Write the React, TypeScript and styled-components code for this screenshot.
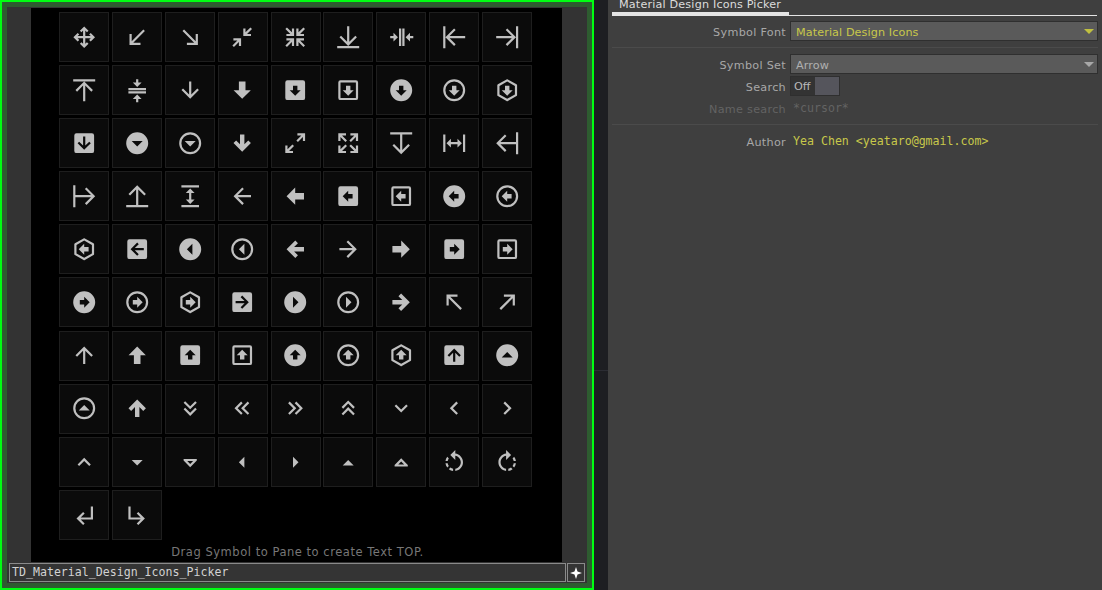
import { createGlobalStyle, styled } from 'styled-components';

const GlobalStyle = createGlobalStyle`
  html, body { margin: 0; padding: 0; background: #1d1e22; overflow: hidden; }
  body { font-family: "DejaVu Sans", sans-serif; }
`;

// rotation around the icon centre, starting from the "down" drawing
const DOWN = 0;
const LEFT = 90;
const UP = 180;
const RIGHT = 270;

const BOLD = 'M12,17L7,12H10V8H14V12H17L12,17Z';
const CIRCLE = 'M12,2A10,10 0 0,1 22,12A10,10 0 0,1 12,22A10,10 0 0,1 2,12A10,10 0 0,1 12,2Z';
const RING = CIRCLE + 'M12,4A8,8 0 0,0 4,12A8,8 0 0,0 12,20A8,8 0 0,0 20,12A8,8 0 0,0 12,4Z';
const BOX = 'M5,3H19A2,2 0 0,1 21,5V19A2,2 0 0,1 19,21H5A2,2 0 0,1 3,19V5A2,2 0 0,1 5,3Z';
const BOX_RING = BOX + 'M5,5V19H19V5Z';
const HEX =
  'M21,16.5C21,16.88 20.79,17.21 20.47,17.38L12.57,21.82C12.41,21.94 12.21,22 12,22C11.79,22 11.59,21.94 11.43,21.82L3.53,17.38C3.21,17.21 3,16.88 3,16.5V7.5C3,7.12 3.21,6.79 3.53,6.62L11.43,2.18C11.59,2.06 11.79,2 12,2C12.21,2 12.41,2.06 12.57,2.18L20.47,6.62C20.79,6.79 21,7.12 21,7.5V16.5M12,4.15L5,8.09V15.91L12,19.85L19,15.91V8.09L12,4.15Z';
const THIN = 'M11,4H13V16L18.5,10.5L19.92,11.92L12,19.84L4.08,11.92L5.5,10.5L11,16V4Z';
const SOLID = 'M9,4H15V12H19.84L12,19.84L4.16,12H9V4Z';
const THICK = 'M10,4H14V13L17.5,9.5L19.92,11.92L12,19.84L4.08,11.92L6.5,9.5L10,13V4Z';
const BOX_ARROW = 'M11,6H13V14.17L16.59,10.59L18,12L12,18L6,12L7.41,10.59L11,14.17Z';
const DROP = 'M7,10L12,15L17,10H7Z';
const DOUBLE = 'M16.59,5.59L18,7L12,13L6,7L7.41,5.59L12,10.17L16.59,5.59M16.59,11.59L18,13L12,19L6,13L7.41,11.59L12,16.17L16.59,11.59Z';
const CHEVRON = 'M7.41,8.58L12,13.17L16.59,8.58L18,10L12,16L6,10L7.41,8.58Z';

type Part = { d: string; rot?: number };
type Symbol = Part[];

const p = (d: string, rot = 0): Symbol => [{ d, rot }];

// one set of the arrow family, turned to the wanted direction
const family = (rot: number) => ({
  thin: p(THIN, rot),
  bold: p(SOLID, rot),
  boldBox: p(BOX + BOLD, rot),
  boldBoxOutline: p(BOX_RING + BOLD, rot),
  boldCircle: p(CIRCLE + BOLD, rot),
  boldCircleOutline: p(RING + BOLD, rot),
  boldHex: [{ d: HEX }, { d: BOLD, rot }] as Symbol,
  box: p(BOX + BOX_ARROW, rot),
  dropCircle: p(CIRCLE + DROP, rot),
  dropCircleOutline: p(RING + DROP, rot),
  thick: p(THICK, rot),
});

const down = family(DOWN);
const left = family(LEFT);
const right = family(RIGHT);
const up = family(UP);

const symbols: Symbol[] = [
  p('M13,11H18L16.5,9.5L17.92,8.08L21.84,12L17.92,15.92L16.5,14.5L18,13H13V18L14.5,16.5L15.92,17.92L12,21.84L8.08,17.92L9.5,16.5L11,18V13H6L7.5,14.5L6.08,15.92L2.16,12L6.08,8.08L7.5,9.5L6,11H11V6L9.5,7.5L8.08,6.08L12,2.16L15.92,6.08L14.5,7.5L13,6V11Z'),
  p('M19,6.41L17.59,5L7,15.59V9H5V19H15V17H8.41L19,6.41Z'),
  p('M5,6.41L6.41,5L17,15.59V9H19V19H9V17H15.59L5,6.41Z'),
  p('M19.5,3.09L15,7.59V4H13V11H20V9H16.41L20.91,4.5L19.5,3.09M4,13V15H7.59L3.09,19.5L4.5,20.91L9,16.41V20H11V13H4Z'),
  p('M19.5,3.09L20.91,4.5L16.41,9H20V11H13V4H15V7.59L19.5,3.09M20,13V15H16.41L20.91,19.5L19.5,20.91L15,16.41V20H13V13H20M4.5,3.09L9,7.59V4H11V11H4V9H7.59L3.09,4.5L4.5,3.09M3.09,19.5L7.59,15H4V13H11V20H9V16.41L4.5,20.91L3.09,19.5Z'),
  p('M19.92,12.08L12,20L4.08,12.08L5.5,10.67L11,16.17V2H13V16.17L18.5,10.66L19.92,12.08M2,20V22H22V20H2Z'),
  p('M13,20V4H15.03V20H13M10,20V4H12.03V20H10M5,8L9.03,12L5,16V13H2V11H5V8M20,16L16,12L20,8V11H23V13H20V16Z'),
  p('M11.92,19.92L4,12L11.92,4.08L13.33,5.5L7.83,11H22V13H7.83L13.34,18.5L11.92,19.92M2,2V22H4V2H2Z'),
  p('M12.08,4.08L20,12L12.08,19.92L10.67,18.5L16.17,13H2V11H16.17L10.67,5.5L12.08,4.08M20,2V22H22V2H20Z'),

  p('M4.08,11.92L12,4L19.92,11.92L18.5,13.33L13,7.83V22H11V7.83L5.5,13.33L4.08,11.92M2,2V4H22V2H2Z'),
  p('M4,12.97H20V15H4V12.97M4,10H20V12.03H4V10M8,5L12,9.03L16,5H13V2H11V5H8M16,20L12,16L8,20H11V23H13V20H16Z'),
  down.thin,
  down.bold,
  down.boldBox,
  down.boldBoxOutline,
  down.boldCircle,
  down.boldCircleOutline,
  down.boldHex,

  down.box,
  down.dropCircle,
  down.dropCircleOutline,
  down.thick,
  p('M10,21V19H6.41L10.91,14.5L9.5,13.09L5,17.59V14H3V21H10M14.5,10.91L19,6.41V10H21V3H14V5H17.59L13.09,9.5L14.5,10.91Z'),
  p('M9.5,13.09L10.91,14.5L6.41,19H10V21H3V14H5V17.59L9.5,13.09M10.91,9.5L9.5,10.91L5,6.41V10H3V3H10V5H6.41L10.91,9.5M14.5,13.09L19,17.59V14H21V21H14V19H17.59L13.09,14.5L14.5,13.09M13.09,9.5L17.59,5H14V3H21V10H19V6.41L14.5,10.91L13.09,9.5Z'),
  p('M22,4V2H2V4H11V18.17L5.5,12.67L4.08,14.08L12,22L19.92,14.08L18.5,12.67L13,18.17V4H22Z'),
  p('M9,11H15V8L19,12L15,16V13H9V16L5,12L9,8V11M2,20V4H4V20H2M20,20V4H22V20H20Z'),
  p('M20,22H22V2H20V11H5.83L11.33,5.5L9.92,4.08L2,12L9.92,19.92L11.33,18.5L5.83,13H20V22Z'),

  p('M4,2H2V22H4V13H18.17L12.67,18.5L14.08,19.92L22,12L14.08,4.08L12.67,5.5L18.17,11H4V2Z'),
  p('M2,20V22H22V20H13V5.83L18.5,11.33L19.92,9.92L12,2L4.08,9.92L5.5,11.33L11,5.83V20H2Z'),
  p('M13,9V15H16L12,19L8,15H11V9H8L12,5L16,9H13M4,2H20V4H4V2M4,20H20V22H4V20Z'),
  left.thin,
  left.bold,
  left.boldBox,
  left.boldBoxOutline,
  left.boldCircle,
  left.boldCircleOutline,

  left.boldHex,
  left.box,
  left.dropCircle,
  left.dropCircleOutline,
  left.thick,
  right.thin,
  right.bold,
  right.boldBox,
  right.boldBoxOutline,

  right.boldCircle,
  right.boldCircleOutline,
  right.boldHex,
  right.box,
  right.dropCircle,
  right.dropCircleOutline,
  right.thick,
  p('M19,17.59L17.59,19L7,8.41V15H5V5H15V7H8.41L19,17.59Z'),
  p('M5,17.59L15.59,7H9V5H19V15H17V8.41L6.41,19L5,17.59Z'),

  up.thin,
  up.bold,
  up.boldBox,
  up.boldBoxOutline,
  up.boldCircle,
  up.boldCircleOutline,
  up.boldHex,
  up.box,
  up.dropCircle,

  up.dropCircleOutline,
  up.thick,
  p(DOUBLE, DOWN),
  p(DOUBLE, LEFT),
  p(DOUBLE, RIGHT),
  p(DOUBLE, UP),
  p(CHEVRON, DOWN),
  p(CHEVRON, LEFT),
  p(CHEVRON, RIGHT),

  p(CHEVRON, UP),
  p(DROP),
  p('M18,9V10.5L12,16.5L6,10.5V9H18M12,13.67L14.67,11H9.33L12,13.67Z'),
  p('M14,7L9,12L14,17V7Z'),
  p('M10,17L15,12L10,7V17Z'),
  p('M7,15L12,10L17,15H7Z'),
  p('M18,16V14.5L12,8.5L6,14.5V16H18M12,11.33L14.67,14H9.33L12,11.33Z'),
  p('M13,4.07V1L8.45,5.55L13,10V6.09C15.84,6.57 18,9.03 18,12C18,14.97 15.84,17.43 13,17.91V19.93C16.95,19.44 20,16.08 20,12C20,7.92 16.95,4.56 13,4.07M7.1,18.32C8.26,19.22 9.61,19.76 11,19.93V17.9C10.13,17.75 9.29,17.41 8.54,16.87L7.1,18.32M6.09,13H4.07C4.24,14.39 4.79,15.73 5.69,16.89L7.1,15.47C6.58,14.72 6.23,13.88 6.09,13M7.11,8.53L5.7,7.11C4.8,8.27 4.24,9.61 4.07,11H6.09C6.23,10.13 6.58,9.28 7.11,8.53Z'),
  p('M16.89,15.5L18.31,16.89C19.21,15.73 19.76,14.39 19.93,13H17.91C17.77,13.87 17.43,14.72 16.89,15.5M13,17.9V19.92C14.39,19.75 15.74,19.21 16.9,18.31L15.46,16.87C14.71,17.41 13.87,17.76 13,17.9M19.93,11C19.76,9.61 19.21,8.27 18.31,7.11L16.89,8.53C17.43,9.28 17.77,10.13 17.91,11H19.93M15.55,5.55L11,1V4.07C7.06,4.56 4,7.92 4,12C4,16.08 7.05,19.44 11,19.93V17.91C8.16,17.43 6,14.97 6,12C6,9.03 8.16,6.57 11,6.09V10L15.55,5.55Z'),

  p('M11,9L12.42,10.42L8.83,14H18V4H20V16H8.83L12.42,19.58L11,21L5,15L11,9Z'),
  p('M19,15L13,21L11.58,19.58L15.17,16H4V4H6V14H15.17L11.58,10.42L13,9L19,15Z'),
];

const Page = styled.div`
  display: flex;
  width: 1102px;
  height: 590px;
  overflow: hidden;
  background: #1d1e22;
`;

const Viewer = styled.div`
  box-sizing: border-box;
  width: 594px;
  height: 590px;
  flex: none;
  border: 2px solid #00ff12;
  background: #2e5c30;
  padding: 5px;
`;

const ViewerInner = styled.div`
  height: 100%;
  display: flex;
  flex-direction: column;
  background: #333333;
`;

const Canvas = styled.div`
  flex: 1;
  margin: 1px 25px 1px 24px;
  background: #000;
  display: flex;
  flex-direction: column;
  padding: 4px 0 3px 28px;
  min-height: 0;
`;

const SymbolGrid = styled.div`
  display: grid;
  grid-template-columns: repeat(9, 50px);
  grid-auto-rows: 50px;
  column-gap: 2.9px;
  row-gap: 3.1px;
`;

const Cell = styled.div`
  box-sizing: border-box;
  display: flex;
  align-items: center;
  justify-content: center;
  background: #0b0b0b;
  border: 1px solid #1e1e1e;
  svg {
    width: 26.4px;
    height: 26.4px;
    fill: #c0c0c0;
    fill-rule: evenodd;
    filter: blur(0.35px);
  }
`;

const Hint = styled.div`
  margin-top: auto;
  margin-left: -26px;
  text-align: center;
  color: #777;
  font-size: 11.5px;
  letter-spacing: 0.53px;
  line-height: 14px;
`;

const PathRow = styled.div`
  display: flex;
  gap: 1px;
  height: 19px;
  padding: 0 2px;
  margin-bottom: 1px;
`;

const PathField = styled.div`
  box-sizing: border-box;
  flex: 1;
  border: 1px solid #8a8a8a;
  background: #343434;
  color: #d2d2d2;
  font-family: "DejaVu Sans Mono", monospace;
  font-size: 11.6px;
  line-height: 17px;
  padding-left: 2px;
`;

const AddButton = styled.div`
  box-sizing: border-box;
  width: 18px;
  display: flex;
  align-items: center;
  justify-content: center;
  border: 1px solid #8a8a8a;
  background: #343434;
  svg {
    width: 12px;
    height: 12px;
    fill: #fff;
  }
`;

const Gutter = styled.div`
  flex: none;
  width: 14px;
  padding-top: 370px;
`;

const GutterLine = styled.div`
  height: 1px;
  background: #2b2c33;
`;

const Params = styled.div`
  flex: 1;
  background: #3f3f3f;
  padding: 0 4px;
  color: #a8a8a8;
  font-size: 11.2px;
`;

const TabBar = styled.div`
  height: 16px;
  border-bottom: 1px solid #e4e4e4;
  box-sizing: border-box;
  margin-right: 1px;
`;

const Tab = styled.div`
  box-sizing: border-box;
  width: 177px;
  height: 16px;
  padding-left: 7px;
  line-height: 9px;
  color: #dcdcdc;
  letter-spacing: 0.17px;
  border-bottom: 4px solid #e4e4e4;
`;

const Row = styled.div<{ $top: number }>`
  display: grid;
  grid-template-columns: 174px 1fr;
  column-gap: 4px;
  align-items: center;
  height: 20px;
  margin-top: ${(props) => props.$top}px;
`;

const Label = styled.div<{ $dim?: boolean }>`
  text-align: right;
  letter-spacing: 0.3px;
  padding-top: 3px;
  color: ${(props) => (props.$dim ? '#636363' : '#a8a8a8')};
`;

const Menu = styled.div<{ $accent?: boolean }>`
  box-sizing: border-box;
  height: 20px;
  display: flex;
  align-items: center;
  justify-content: space-between;
  padding: 2px 3px 0 5px;
  letter-spacing: 0.1px;
  background: #5a5a5a;
  border: 1px solid #2f2f2f;
  color: ${(props) => (props.$accent ? '#c8c84a' : '#b0b0b0')};
  &::after {
    content: '';
    margin-top: -2px;
    border-left: 5px solid transparent;
    border-right: 5px solid transparent;
    border-top: 5px solid ${(props) => (props.$accent ? '#c0c040' : '#a8a8a8')};
  }
`;

const Divider = styled.div`
  height: 1px;
  margin-top: 6px;
  background: #4b4b4b;
`;

const Toggle = styled.div`
  box-sizing: border-box;
  width: 50px;
  height: 20px;
  display: flex;
  border: 1px solid #2f2f2f;
  background: #333;
`;

const ToggleText = styled.div`
  width: 24px;
  line-height: 20px;
  padding-left: 3px;
  box-sizing: border-box;
  color: #b8b8b8;
`;

const ToggleSwatch = styled.div`
  flex: 1;
  background: #55555c;
`;

const MonoValue = styled.div<{ $dim?: boolean }>`
  font-family: "DejaVu Sans Mono", monospace;
  font-size: 11.6px;
  padding-left: 3px;
  color: ${(props) => (props.$dim ? '#636363' : '#c8c84a')};
`;

export default function App() {
  return (
    <Page>
      <GlobalStyle />
      <Viewer>
        <ViewerInner>
          <Canvas>
            <SymbolGrid>
              {symbols.map((parts, i) => (
                <Cell key={i}>
                  <svg viewBox="0 0 24 24">
                    {parts.map((part, j) => (
                      <path key={j} d={part.d} transform={part.rot ? `rotate(${part.rot} 12 12)` : undefined} />
                    ))}
                  </svg>
                </Cell>
              ))}
            </SymbolGrid>
            <Hint>Drag Symbol to Pane to create Text TOP.</Hint>
          </Canvas>
          <PathRow>
            <PathField>TD_Material_Design_Icons_Picker</PathField>
            <AddButton>
              <svg viewBox="0 0 12 12">
                <path d="M6,0L7.5,4.5L12,6L7.5,7.5L6,12L4.5,7.5L0,6L4.5,4.5Z" />
              </svg>
            </AddButton>
          </PathRow>
        </ViewerInner>
      </Viewer>
      <Gutter>
        <GutterLine />
      </Gutter>
      <Params>
        <TabBar>
          <Tab>Material Design Icons Picker</Tab>
        </TabBar>
        <Row $top={5}>
          <Label>Symbol Font</Label>
          <Menu $accent>Material Design Icons</Menu>
        </Row>
        <Divider />
        <Row $top={6}>
          <Label>Symbol Set</Label>
          <Menu>Arrow</Menu>
        </Row>
        <Row $top={2}>
          <Label>Search</Label>
          <Toggle>
            <ToggleText>Off</ToggleText>
            <ToggleSwatch />
          </Toggle>
        </Row>
        <Row $top={2}>
          <Label $dim>Name search</Label>
          <MonoValue $dim>*cursor*</MonoValue>
        </Row>
        <Divider />
        <Row $top={6}>
          <Label>Author</Label>
          <MonoValue>Yea Chen &lt;yeataro@gmail.com&gt;</MonoValue>
        </Row>
      </Params>
    </Page>
  );
}
